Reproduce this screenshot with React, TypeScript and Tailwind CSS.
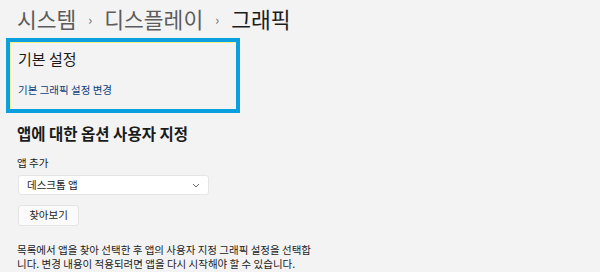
import React from "react";

export default function App() {
  return (
    <div
      className="w-[600px] h-[272px] overflow-hidden bg-[#f3f3f3] text-[#1b1b1b]"
      style={{ fontFamily: '"Noto Sans CJK KR", "Noto Sans", sans-serif' }}
    >
      <div className="flex items-center pl-[17px] pt-[4px] h-[34px] text-[21.5px] leading-none text-[#1f1f1f]">
        <span className="text-[#5c5c5c]">시스템</span>
        <span className="mx-[12px] text-[13px] text-[#6b6b6b]">›</span>
        <span className="text-[#5c5c5c]">디스플레이</span>
        <span className="mx-[12px] text-[13px] text-[#6b6b6b]">›</span>
        <span className="text-[#1b1b1b]">그래픽</span>
      </div>

      <div className="ml-[6px] mt-[4px] w-[234px] h-[75px] border-[4px] border-[#0aa0e0]">
        <div className="h-full border-t border-l border-[#f3ef8a] pl-[7px] pt-[6px]">
          <div className="text-[15px] leading-[20px] text-[#1b1b1b]">기본 설정</div>
          <div className="mt-[14px] text-[10.5px] leading-[14px] text-[#0b3f7f]">
            기본 그래픽 설정 변경
          </div>
        </div>
      </div>

      <div className="pl-[17px]">
        <div className="mt-[9px] text-[15.5px] leading-[22px] font-semibold text-[#1b1b1b]">
          앱에 대한 옵션 사용자 지정
        </div>
        <div className="mt-[12px] text-[10.5px] leading-[14px] text-[#1b1b1b]">앱 추가</div>
        <div className="mt-[5px] ml-[1px] flex items-center justify-between w-[191px] h-[20px] bg-white border border-[#e5e5e5] rounded-[3px] pl-[8px] pr-[8px]">
          <span className="text-[10.5px] leading-none text-[#1b1b1b]">데스크톱 앱</span>
          <svg width="8" height="5" viewBox="0 0 8 5" fill="none">
            <path d="M1 1l3 3 3-3" stroke="#6b6b6b" strokeWidth="1" />
          </svg>
        </div>
        <div className="mt-[10px] ml-[1px] flex items-center justify-center w-[61px] h-[21px] bg-[#fbfbfb] border border-[#e5e5e5] rounded-[3px] text-[10.5px] leading-none text-[#1b1b1b]">
          찾아보기
        </div>
        <div className="mt-[17px] text-[10.5px] leading-[14px] text-[#1b1b1b] w-[330px]">
          목록에서 앱을 찾아 선택한 후 앱의 사용자 지정 그래픽 설정을 선택합
          <br />
          니다. 변경 내용이 적용되려면 앱을 다시 시작해야 할 수 있습니다.
        </div>
      </div>
    </div>
  );
}
